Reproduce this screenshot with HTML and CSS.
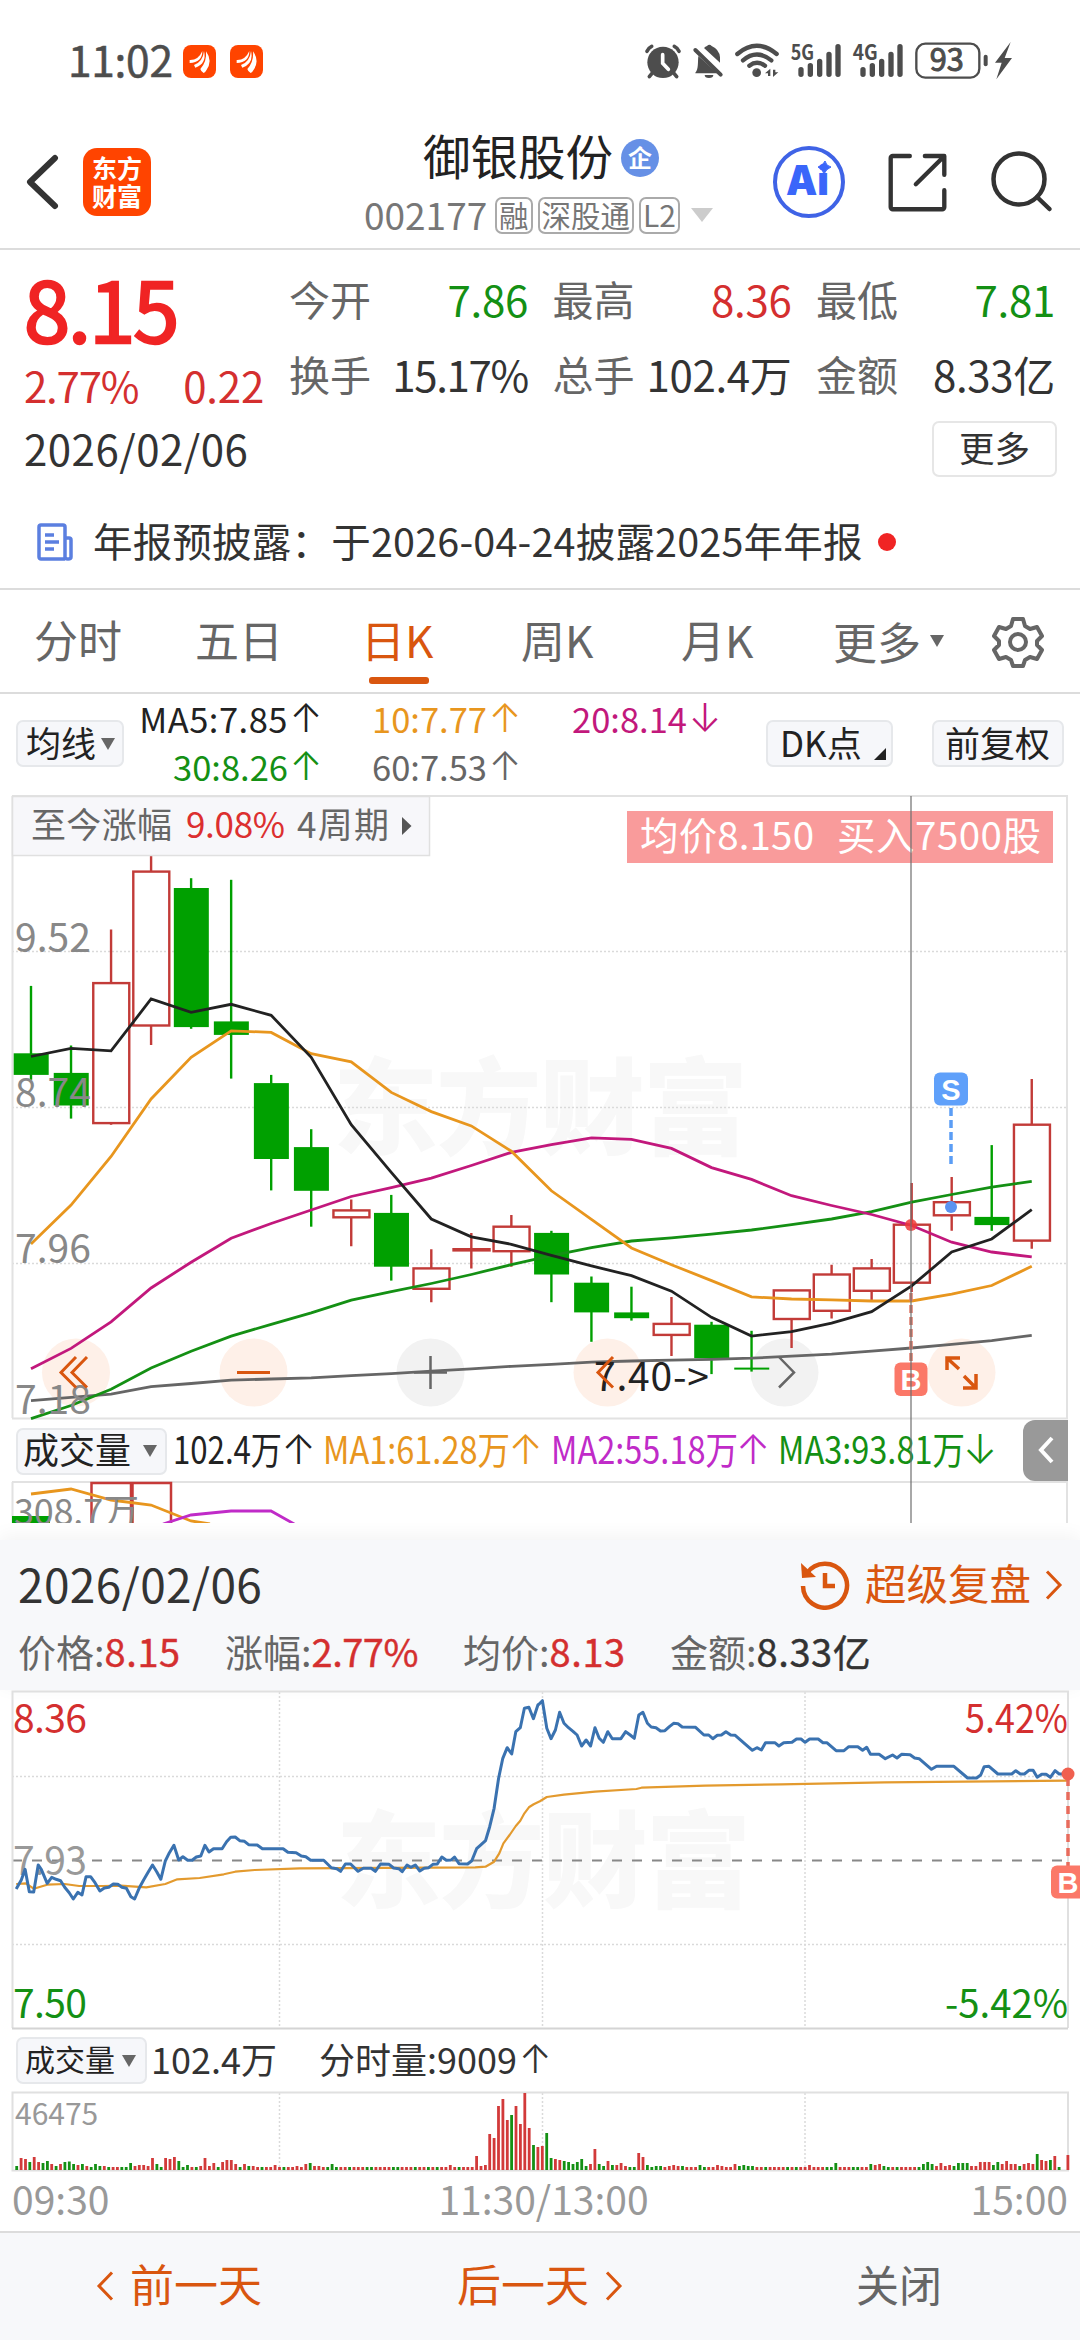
FILE: index.html
```html
<!DOCTYPE html>
<html lang="zh-CN">
<head>
<meta charset="utf-8">
<title>御银股份 002177</title>
<link rel="stylesheet" href="styles.css">
</head>
<body>
<div class="status">
  <span class="clock">11:02</span>
  <svg class="app-dot" viewBox="0 0 99 99"><rect width="99" height="99" rx="24" fill="#ff4400"/><path d="M20 45Q46 46 58 18Q58 52 20 54ZM33 60Q60 50 63 18Q72 56 37 68ZM52 72Q72 50 69 19Q90 48 70 76Q66 84 62 84Q54 80 52 72Z" fill="#fff"/></svg>
  <svg class="app-dot" viewBox="0 0 99 99"><rect width="99" height="99" rx="24" fill="#ff4400"/><path d="M20 45Q46 46 58 18Q58 52 20 54ZM33 60Q60 50 63 18Q72 56 37 68ZM52 72Q72 50 69 19Q90 48 70 76Q66 84 62 84Q54 80 52 72Z" fill="#fff"/></svg>
  <svg class="sys" viewBox="0 0 1200 210" fill="#4d4d4d">
    <g stroke="#4d4d4d" stroke-linecap="round" fill="none">
      <circle cx="99" cy="97" r="47" fill="#4d4d4d" stroke="none"/>
      <path d="M51 64Q56 53 65 49M147 64Q142 53 133 49M66 130l-8 10M132 130l8 10" stroke-width="11"/>
      <path d="M98 74v26l17 18" stroke="#fff" stroke-width="11"/>
    </g>
    <path d="M196 128C206 118 203 95 205 78L262 130H196ZM222 54Q226 50 231 48Q238 41 245 48Q268 58 270 82V98ZM224 135h26a13 9 0 0 1-26 0Z"/>
    <path d="M196 60L272 134" stroke="#4d4d4d" stroke-width="12" stroke-linecap="round"/>
    <g fill="none" stroke="#4d4d4d" stroke-width="13" stroke-linecap="round">
      <path d="M322 72Q380 23 440 72M339 91Q380 56 424 91M358 107Q381 90 405 107"/>
    </g>
    <circle cx="380" cy="128" r="13"/><path d="M405 130l16-14v22h-7v-8zM445 127l-16 14v-22h7v8z"/>
    <text x="482" y="90" font-size="62" font-weight="600" textLength="70" lengthAdjust="spacingAndGlyphs">5G</text>
    <text x="668" y="90" font-size="62" font-weight="600" textLength="75" lengthAdjust="spacingAndGlyphs">4G</text>
    <path d="M513 119v14M541 107v26M569 94v39M597 73v60M624 50v83M699 119v14M727 107v26M755 94v39M783 73v60M810 50v83" stroke="#4d4d4d" stroke-width="16" stroke-linecap="round"/>
    <rect x="859" y="41" width="189" height="102" rx="27" fill="none" stroke="#4d4d4d" stroke-width="7"/>
    <text x="950" y="124" font-size="92" stroke="#4d4d4d" stroke-width="3" text-anchor="middle">93</text>
    <rect x="1061" y="74" width="12" height="35" rx="6"/>
    <path d="M1142 36L1095 98h20l-16 50L1146 84h-22z"/>
  </svg>
</div>

<header class="header">
  <svg class="back" viewBox="0 0 34 56"><path d="M29 4L4 28L29 52" fill="none" stroke="#333" stroke-width="6" stroke-linecap="round" stroke-linejoin="round"/></svg>
  <div class="logo"><span>东方</span><span>财富</span></div>
  <div class="stock">
    <div class="name">御银股份<i>企</i></div>
    <div class="code"><span class="num">002177</span><b>融</b><b>深股通</b><b class="l2">L2</b><em></em></div>
  </div>
  <svg class="ai" viewBox="0 0 74 74"><circle cx="37" cy="37" r="34" fill="none" stroke="#3f63e6" stroke-width="4"/><text class="ai-t" x="14" y="50" textLength="43" lengthAdjust="spacingAndGlyphs">Ai</text><path d="M53 16Q54 21 59 22Q54 24 52 29Q51 24 46 22Q51 21 53 16Z" fill="#3a66fa" stroke="#3a66fa"/></svg>
  <svg class="share" viewBox="400 57 200 200" fill="none" stroke="#333" stroke-width="13" stroke-linecap="round" stroke-linejoin="round"><path d="M477 78H426a6 6 0 0 0-6 6v147a6 6 0 0 0 6 6h148a6 6 0 0 0 6-6V180M522 78h58v56M578 80L495 162"/></svg>
  <svg class="search" viewBox="0 0 64 64" fill="none" stroke="#333" stroke-width="4.5" stroke-linecap="round"><circle cx="29" cy="28" r="25.5"/><path d="M47 46l12.500 12"/></svg>
</header>

<section class="quote">
  <div class="q-left">
    <div class="price">8.15</div>
    <div class="chg"><span>2.77%</span><span class="abs">0.22</span></div>
    <div class="date">2026/02/06</div>
  </div>
  <div class="q-right">
    <div class="cell"><label>今开</label><span class="dn">7.86</span></div>
    <div class="cell"><label>最高</label><span class="up">8.36</span></div>
    <div class="cell"><label>最低</label><span class="dn">7.81</span></div>
    <div class="cell"><label>换手</label><span class="tight">15.17%</span></div>
    <div class="cell"><label>总手</label><span>102.4万</span></div>
    <div class="cell"><label>金额</label><span>8.33亿</span></div>
    <div class="more">更多</div>
  </div>
</section>
<div class="notice">
  <svg viewBox="0 0 36 38" fill="none" stroke="#5b7fe0" stroke-width="3.500"><path d="M28 36H4a2 2 0 0 1-2-2V4a2 2 0 0 1 2-2h22a2 2 0 0 1 2 2v30q0 2 3 2t3-2V17a2 2 0 0 0-2-2h-4M8 12h9M8 19h14M8 26h9"/></svg>
  <span>年报预披露：于2026-04-24披露2025年年报</span><i></i>
</div>

<nav class="tabs">
  <span>分时</span><span>五日</span><span class="on">日K</span><span>周K</span><span>月K</span><span class="drop">更多<em class="tri"></em></span>
  <svg viewBox="0 0 52 52" fill="none" stroke="#666" stroke-width="4" stroke-linejoin="round"><path d="M21 3h10l2 7 5 3 7-2 5 9-5 5v4l5 5-5 9-7-2-5 3-2 6H21l-2-6-5-3-7 2-5-9 5-5v-4l-5-5 5-9 7 2 5-3z"/><circle cx="26" cy="26" r="8"/></svg>
</nav>

<div class="mabar">
  <div class="chip c-ma">均线<em class="tri"></em></div>
  <div class="mas">
    <span class="k">MA5:7.85<u>↑</u></span><span class="o">10:7.77<u>↑</u></span><span class="m">20:8.14<u>↓</u></span>
    <span class="g">30:8.26<u>↑</u></span><span class="gr">60:7.53<u>↑</u></span>
  </div>
  <div class="chip c-dk">DK点<em></em></div>
  <div class="chip c-fq">前复权</div>
</div>

<section class="kline">
  <svg id="kchart" class="block" viewBox="0 794 1080 626" width="1080" height="626">
    <text class="wm" x="333" y="1146" textLength="415">东方财富</text>
    <g fill="none" stroke="#dadada" stroke-width="1.500" stroke-dasharray="2 2"><path d="M12 951.500H1067M12 1107.500H1067M12 1263.500H1067"/></g>
    <path d="M12 796H1068M12 1418.500H1068M12.500 796V1418M1067 796V1418" fill="none" stroke="#e2e2e2" stroke-width="2"/>
    <g fill="#fef0e8"><circle cx="76" cy="1372.500" r="34"/><circle cx="253.500" cy="1372.500" r="34"/><circle cx="607.500" cy="1372.500" r="34"/><circle cx="961.500" cy="1372.500" r="34"/></g>
    <g fill="#f2f2f2"><circle cx="430.500" cy="1372.500" r="34"/><circle cx="784.500" cy="1372.500" r="34"/></g>
    <g id="candles"></g>
    <rect x="12.500" y="796.500" width="417" height="59" fill="#f7f7fa" stroke="#e0e0e0" stroke-width="1.500"/>
    <g font-size="35" fill="#666"><text x="31" y="838" textLength="141">至今涨幅</text><text x="186" y="838" fill="#dc2f2f" textLength="99">9.08%</text><text x="297" y="838" textLength="92">4周期</text></g>
    <path d="M402 817l9.500 9-9.500 9z" fill="#555"/>
    <g font-size="39" fill="#888"><text x="15" y="952">9.52</text><text x="15" y="1107">8.74</text><text x="15" y="1263">7.96</text><text x="15" y="1414">7.18</text></g>
    <rect x="627" y="811" width="426" height="52" fill="#f99b9b"/>
    <g font-size="38.500" fill="#fff"><text x="640" y="850" textLength="174">均价8.150</text><text x="837" y="850" textLength="204">买入7500股</text></g>
    <text x="594" y="1391" font-size="39" fill="#222" textLength="115">7.40-&gt;</text>
    <g fill="none" stroke="#d9560f" stroke-width="3"><path d="M76 1357l-15 15.500 15 15M87 1357l-15 15.500 15 15M237 1372.500h33M613 1357l-15 15.500 15 15"/></g>
    <g fill="none" stroke="#666" stroke-width="2.500"><path d="M414 1372.500h33M430.500 1356v33M779 1357l15 15.500-15 15"/></g>
    <path d="M947 1370v-12h13M947 1358l12 11M976 1374v14h-13M976 1388l-12-12" fill="none" stroke="#d9560f" stroke-width="3.500"/>
    <path d="M951 1108v56" stroke="#5b9df5" stroke-width="3.500" stroke-dasharray="8 4"/>
    <rect x="934" y="1072.500" width="34" height="33" rx="6" fill="#5fa0fa"/><text class="mk" x="951" y="1100">S</text>
    <circle cx="951" cy="1207" r="6" fill="#5b93f0"/>
    <path d="M911 1293v69" stroke="#e07a6a" stroke-width="3.500" stroke-dasharray="8 4"/>
    <rect x="894.500" y="1362.500" width="33" height="33.500" rx="6" fill="#fb7868"/><text class="mk" x="911" y="1390">B</text>
    <circle cx="911" cy="1225" r="6" fill="#ee3b38" fill-opacity=".85"/>
  </svg>
  <div class="volrow">
    <div class="chip c-vol">成交量<em class="tri"></em></div>
    <svg class="block" viewBox="170 1420 850 60" width="850" height="60" font-size="38">
      <g fill="#222"><text x="173" y="1464" textLength="109" lengthAdjust="spacingAndGlyphs">102.4万</text><text class="ar" x="298.500" y="1464">↑</text></g>
      <g fill="#e8961e"><text x="323" y="1464" textLength="187" lengthAdjust="spacingAndGlyphs">MA1:61.28万</text><text class="ar" x="525.500" y="1464">↑</text></g>
      <g fill="#c02bc8"><text x="551" y="1464" textLength="187" lengthAdjust="spacingAndGlyphs">MA2:55.18万</text><text class="ar" x="753" y="1464">↑</text></g>
      <g fill="#149014"><text x="778" y="1464" textLength="187" lengthAdjust="spacingAndGlyphs">MA3:93.81万</text><text class="ar" x="980" y="1464">↓</text></g>
    </svg>
  </div>
  <svg class="block" viewBox="0 1480 1080 43" width="1080" height="43" fill="none">
    <path d="M12 1482H1068M12.500 1482V1523M1067 1482V1523" stroke="#e2e2e2" stroke-width="2"/>
    <rect x="12" y="1516" width="38" height="10" fill="#00a000"/>
    <path d="M91.500 1530V1483H131V1530M132.500 1530V1483H171V1530" stroke="#c63a38" stroke-width="2.500"/>
    <path d="M31 1494L71 1489L111 1500L151 1505L191 1521L210 1524" stroke="#e8961e" stroke-width="2.800"/>
    <path d="M163 1524L191 1515L231 1511H271L296 1525" stroke="#c02bc8" stroke-width="2.800"/>
    <text x="14" y="1525" font-size="36" fill="#888" textLength="125">308.7万</text>
  </svg>
  <div class="cross"></div>
  <div class="fold"><svg viewBox="0 0 16 28" width="16" height="28"><path d="M14 2L3 14l11 12" fill="none" stroke="#fff" stroke-width="4"/></svg></div>
</section>

<section class="panel">
  <div class="p-top">
    <span class="p-date">2026/02/06</span>
    <svg class="replay" viewBox="0 0 50 50" fill="none" stroke="#d9560f" stroke-width="4.500"><path d="M7 13A22 22 0 1 1 3 26M25 13v13h10"/><path d="M1 3l1 15 14-1z" fill="#d9560f" stroke="none"/></svg>
    <span class="p-link">超级复盘</span>
    <svg class="chev" viewBox="0 0 18 30"><path d="M2 1.500L15 15L2 28.500" fill="none" stroke="#d9560f" stroke-width="3"/></svg>
  </div>
  <div class="p-row"><span>价格:<b class="up">8.15</b></span><span>涨幅:<b class="up">2.77%</b></span><span>均价:<b class="up">8.13</b></span><span>金额:<b>8.33亿</b></span></div>
</section>

<svg class="block" viewBox="0 1690 1080 342" width="1080" height="342">
  <text class="wm" x="336" y="1899" textLength="415">东方财富</text>
  <path d="M12 1776.500H1068M12 1944.500H1068M279.500 1692V2028M542.500 1692V2028M805 1692V2028" fill="none" stroke="#dadada" stroke-width="1.500" stroke-dasharray="2 2"/>
  <path d="M12 1860.500H1068" stroke="#888" stroke-width="2" stroke-dasharray="10 10"/>
  <path d="M12.500 2028V1691.500H1068V2028" fill="none" stroke="#e0e0e0" stroke-width="2"/><path d="M12 2028.500H1068" stroke="#d4d4d4" stroke-width="2"/>
  <g font-size="39"><text x="13" y="1732.500" fill="#d42f2f" textLength="74">8.36</text><text x="13" y="1875" fill="#999" textLength="74">7.93</text><text x="13" y="2018" fill="#149014" textLength="74">7.50</text>
  <text x="965" y="1732.500" fill="#d42f2f" textLength="103" lengthAdjust="spacingAndGlyphs">5.42%</text><text x="945" y="2018" fill="#149014" textLength="123" lengthAdjust="spacingAndGlyphs">-5.42%</text></g>
  <g id="minute"></g>
  <path d="M1068 1778v88" stroke="#e86b5c" stroke-width="3.500" stroke-dasharray="8 6"/>
  <circle cx="1068" cy="1774" r="6.500" fill="#f0604f"/>
  <rect x="1051" y="1865.500" width="34" height="33" rx="6" fill="#fb7868"/><text class="mk" x="1068" y="1893">B</text>
</svg>

<div class="volrow2">
  <div class="chip c-vol2">成交量<em class="tri"></em></div>
  <span class="v1">102.4万</span><span>分时量:9009<u>↑</u></span>
</div>
<svg class="block" viewBox="0 2088 1080 84" width="1080" height="84">
  <path d="M279.500 2093V2170M542.500 2093V2170M805 2093V2170" fill="none" stroke="#dadada" stroke-width="1.500" stroke-dasharray="2 2"/>
  <rect x="12.500" y="2092.500" width="1055.500" height="78" fill="none" stroke="#e0e0e0" stroke-width="2"/>
  <text x="15" y="2125" font-size="30" fill="#999">46475</text>
  <g id="bars"></g>
</svg>
<div class="times"><span>09:30</span><span class="mid">11:30/13:00</span><span>15:00</span></div>

<footer class="footer">
  <span class="prev"><svg viewBox="0 0 18 30"><path d="M16 1.500L3 15L16 28.500" fill="none" stroke="#d9560f" stroke-width="3"/></svg>前一天</span>
  <span class="next">后一天<svg viewBox="0 0 18 30"><path d="M2 1.500L15 15L2 28.500" fill="none" stroke="#d9560f" stroke-width="3"/></svg></span>
  <span class="close">关闭</span>
</footer>
<script src="charts.js"></script>
</body>
</html>
```
FILE: styles.css
```css
* { box-sizing: border-box; }
body { margin: 0; width: 1080px; height: 2340px; overflow: hidden; background: #fff; color: #333; font-family: "Noto Sans CJK SC", "Noto Sans", sans-serif; font-size: 42px; line-height: 1; }
i, em { font-style: normal; }
u { text-decoration: none; font-family: Inter, "Liberation Sans", sans-serif; font-weight: 300; }
.block { display: block; }
.up { color: #d42f2f; }
.dn { color: #149014; }
.tri { display: inline-block; border: solid transparent; border-width: 12px 7.500px 0; border-top-color: #666; }
.wm { font-size: 105px; font-weight: 900; fill: #f8f8f8; }
.mk { font-family: "Liberation Sans", Arial, sans-serif; font-weight: 700; font-size: 29px; fill: #fff; text-anchor: middle; }
.ar { font-family: Inter, "Liberation Sans", sans-serif; font-weight: 300; text-anchor: middle; }

.status { display: flex; height: 115px; padding-left: 68px; }
.clock { width: 115px; line-height: 60px; margin-top: 29px; font-size: 42.500px; color: #4d4d4d; letter-spacing: -.3px; -webkit-text-stroke: .5px #4d4d4d; }
.app-dot { width: 33px; height: 33px; margin: 45px 14px 0 0; flex: none; }
.sys { width: 400px; height: 70px; margin: 30px 0 0 353px; flex: none; }

.header { display: flex; height: 135px; border-bottom: 2px solid #dcdcdc; }
.back { width: 34px; height: 56px; margin: 39px 0 0 26px; }
.logo { width: 68px; height: 68px; margin: 33px 0 0 23px; padding-top: 5px; border-radius: 14px; background: #ff4400; color: #fff; font-size: 25px; font-weight: 700; line-height: 28px; text-align: center; display: flex; flex-direction: column; }
.stock { width: 400px; margin-left: 213px; }
.name { display: flex; align-items: center; height: 80px; padding-left: 59px; font-size: 47.500px; color: #222; }
.name i { width: 38px; height: 38px; margin-left: 8px; margin-top: 5px; border-radius: 50%; background: #6690e6; color: #fff; font-size: 24px; font-weight: 700; line-height: 35px; text-align: center; }
.code { display: flex; align-items: center; height: 42px; color: #777; font-size: 37px; margin-top: -1px; }
.code .num { width: 131px; margin-top: -2px; }
.code b { height: 37px; margin-right: 5px; padding: 0 2px; border: 2px solid #aaa; border-radius: 7px; font-size: 29.500px; font-weight: 400; line-height: 30px; margin-top: 1px; }
.code .l2 { width: 41px; padding: 0; text-align: center; font-size: 30px; }
.code em { border: solid transparent; border-width: 14px 11px 0; border-top-color: #ccc; margin-left: 6px; }
.ai { width: 74px; height: 74px; margin: 30px 0 0 8px; }
.ai-t { font-family: Inter, sans-serif; font-size: 41px; font-weight: 900; fill: #3a66fa; }
.share { width: 67px; height: 67px; margin: 34px 0 0 38px; }
.search { width: 64px; height: 64px; margin: 36px 0 0 39px; }

.quote { display: flex; height: 250px; }
.q-left { width: 289px; padding: 6px 0 0 24px; }
.price { line-height: 102px; height: 100px; font-size: 83px; color: #f02424; letter-spacing: -2px; -webkit-text-stroke: 2.500px #f02424; }
.chg { display: flex; justify-content: space-between; padding-right: 25px; line-height: 58px; height: 56px; color: #d42f2f; letter-spacing: -1.200px; }
.chg .abs { letter-spacing: -.2px; }
.date { line-height: 72px; letter-spacing: .5px; }
.q-right { width: 765px; height: 230px; padding-top: 11px; display: grid; grid-template-columns: 239px 239px 239px; grid-template-rows: 75px 75px 56px; column-gap: 24.500px; }
.cell { display: flex; justify-content: space-between; line-height: 75px; white-space: nowrap; }
.cell span { letter-spacing: -.3px; }
.cell .tight { letter-spacing: -1.300px; }
.cell label { font-size: 41px; color: #666; }
.q-right .more { margin: 10px -2px 0 0; }
.more { grid-column: 3; justify-self: end; width: 125px; height: 56px; border: 2px solid #e6e6e6; border-radius: 7px; font-size: 35.500px; line-height: 48px; text-align: center; }

.notice { display: flex; align-items: center; height: 90px; padding: 0 0 9px 37px; border-bottom: 2px solid #dcdcdc; font-size: 39.500px; letter-spacing: .2px; }
.notice svg { width: 36px; height: 38px; margin: 4px 20px 0 0; }
.notice i { width: 18px; height: 18px; margin: 5px 0 0 15px; border-radius: 50%; background: #f02424; }

.tabs { display: grid; grid-template-columns: 161px 166px 160px 160px 152px 159px 52px; height: 104px; padding-left: 34px; border-bottom: 2px solid #dcdcdc; font-size: 44px; line-height: 99px; color: #666; }
.tabs .on { color: #d9560f; position: relative; }
.tabs .on::after { content: ""; position: absolute; left: 8px; bottom: 8px; width: 60px; height: 7px; border-radius: 3px; background: #d9560f; }
.tabs .drop { display: flex; align-items: center; }
.tabs .tri { margin: 0 0 0 9px; border-width: 12px 7px 0; }
.tabs svg { width: 52px; height: 52px; margin-top: 26px; }

.mabar { display: flex; height: 100px; padding: 26px 0 0 16px; }
.chip { display: flex; align-items: center; height: 47px; padding-bottom: 4px; border: 2px solid #e6e8eb; border-radius: 7px; background: #f6f7fa; color: #222; white-space: nowrap; }
.chip .tri { margin-top: 5px; }
.c-ma { width: 108px; padding-left: 8px; font-size: 35px; }
.c-ma .tri { margin-left: 5px; }
.mas { display: grid; grid-template-columns: 192px 199px 200px; grid-template-rows: 48px 48px; justify-items: end; width: 642px; margin-top: -26px; font-size: 34.500px; line-height: 48px; white-space: nowrap; }
.mas span { display: flex; color: #222; }
.mas u { width: 20px; margin-left: 8px; display: flex; justify-content: center; font-size: 39px; letter-spacing: 0; }
.mas .k { letter-spacing: .5px; }
.mas .o { color: #e8961e; } .mas .m { color: #c2187c; } .mas .g { color: #149014; } .mas .gr { color: #666; }
.c-dk { position: relative; width: 127px; padding-left: 12px; font-size: 35px; }
.c-dk em { position: absolute; right: 5px; bottom: 5px; width: 12px; height: 12px; background: #222; clip-path: polygon(100% 0, 100% 100%, 0 100%); }
.c-fq { width: 132px; margin-left: 39px; padding-left: 11px; font-size: 35px; }

.kline { position: relative; height: 729px; }
.volrow { display: flex; align-items: center; height: 60px; padding-left: 16px; }
.c-vol { width: 151px; margin: 2px 3px 0 0; padding: 0 0 6px 5px; font-size: 36px; }
.c-vol .tri { margin-left: 12px; }
.volrow .ar { font-size: 41px; }
.cross { position: absolute; left: 910px; top: 2px; width: 2px; height: 727px; background: rgba(110,110,110,.6); }
.fold { position: absolute; left: 1023px; top: 626px; width: 45px; height: 61px; border-radius: 12px 0 0 12px; background: #999; padding: 16px 0 0 15px; }
.fold svg { display: block; }

.panel { margin-top: 17px; height: 150px; background: #f7f8fa; box-shadow: 0 -4px 18px rgba(0,0,0,.05); }
.p-top { display: flex; align-items: center; height: 86px; padding: 0 0 0 18px; }
.p-date { width: 782px; font-size: 46px; letter-spacing: .4px; }
.replay { width: 50px; height: 50px; margin-top: 4px; }
.p-link { width: 180px; padding-left: 15px; font-size: 41.500px; color: #d9560f; white-space: nowrap; }
.chev { width: 18px; height: 30px; margin: 4px 0 0 15px; }
.p-row { display: grid; grid-template-columns: 207px 238px 207px 300px; padding-left: 18px; height: 44px; font-size: 38px; line-height: 49px; color: #666; white-space: nowrap; }
.p-row b { font-weight: 400; color: #333; letter-spacing: .6px; -webkit-text-stroke: .4px; }
.p-row span:nth-child(2) b { letter-spacing: -.5px; }
.p-row .up { color: #d42f2f; }

.volrow2 { display: flex; align-items: center; height: 56px; padding-left: 16px; font-size: 36px; }
.volrow2 > span { display: flex; margin-top: -4px; align-items: center; }
.volrow2 u { margin-left: 2px; font-size: 39px; }
.c-vol2 { width: 131px; margin-right: 4px; padding-left: 7px; font-size: 30px; }
.c-vol2 .tri { margin-left: 7px; }
.v1 { width: 168px; }
.times { display: flex; justify-content: space-between; height: 59px; padding: 0 12px; font-size: 39px; line-height: 52px; color: #999; }
.times .mid { padding-left: 7px; }
.footer { display: flex; height: 109px; padding-bottom: 5px; border-top: 2px solid #dcdcdc; background: #f7f8fa; font-size: 44px; line-height: 99px; color: #d9560f; }
.footer span { display: flex; align-items: center; height: 100px; }
.footer svg { width: 18px; height: 30px; margin-top: 5px; }
.prev { width: 360px; padding-left: 96px; gap: 16px; }
.next { width: 360px; padding-left: 97px; gap: 16px; }
.close { width: 360px; padding-left: 136px; color: #666; font-size: 43px; }
```
FILE: charts.js
```js
const NS = 'http://www.w3.org/2000/svg';
function add(id, tag, attrs) {
  const el = document.createElementNS(NS, tag);
  for (const k in attrs) el.setAttribute(k, attrs[k]);
  document.getElementById(id).appendChild(el);
}
const GREEN = '#00a000', RED = '#c23b38';

// daily candles: [type, high, body top, body bottom, low], in chart units from the top
const candles = [
  ['g',480,645,698,710],['g',626,693,773,805],['r',342,473,816,820],['r',150,200,577,625],['g',216,240,581,585],
  ['g',220,567,600,707],['g',698,718,904,981],['g',831,875,982,1070],['r',1003,1030,1047,1118],['g',992,1036,1168,1202],
  ['r',1125,1172,1222,1255],['r',1085,1125,1128,1172],['r',1041,1070,1130,1168],['g',1080,1085,1187,1255],['g',1192,1207,1280,1352],
  ['g',1217,1280,1294,1300],['r',1242,1308,1335,1387],['g',1303,1310,1392,1431],['g',1325,1415,1420,1425],['r',1225,1226,1296,1367],
  ['r',1163,1187,1276,1295],['r',1149,1172,1227,1250],['r',963,1065,1207,1230],['r',948,1010,1042,1080],['g',870,1046,1066,1080],['r',708,820,1104,1124]
];
const cx = i => 31 + 40.03 * i;
const cy = v => +(790 + v / 2.45).toFixed(1);
candles.forEach(([t, h, a, b, l], i) => {
  const x = cx(i), c = t === 'g' ? GREEN : RED;
  if (t === 'g') {
    add('candles', 'path', { d: `M${x} ${cy(h)}V${cy(l)}`, stroke: c, 'stroke-width': 2.4 });
    add('candles', 'rect', { x: x - 17.3, y: cy(a), width: 35, height: cy(b) - cy(a), fill: c });
  } else {
    add('candles', 'path', { d: `M${x} ${cy(h)}V${cy(a)}M${x} ${cy(b)}V${cy(l)}`, stroke: c, 'stroke-width': 2.4 });
    add('candles', 'rect', { x: x - 17.8, y: cy(a), width: 36, height: cy(b) - cy(a), fill: 'none', stroke: c, 'stroke-width': 2.4 });
  }
});
const averages = {
  '#666666': [1496,1488,1480,1462,1454,1446,1443,1440,1435,1430,1424,1418,1412,1407,1402,1399,1397,1395,1392,1387,1382,1375,1367,1358,1349,1336],
  '#149014': [1540,1508,1468,1416,1375,1338,1309,1281,1250,1229,1209,1187,1163,1141,1121,1105,1097,1088,1078,1065,1051,1033,1010,991,973,959],
  '#c2187c': [1418,1368,1303,1220,1157,1098,1062,1029,996,974,951,920,888,869,852,856,878,925,954,994,1018,1040,1067,1108,1132,1144],
  '#e8961e': [1112,1017,898,757,655,590,594,646,666,741,788,823,885,982,1052,1122,1163,1202,1242,1247,1249,1252,1252,1235,1214,1167],
  '#222222': [653,633,639,512,545,525,552,655,820,937,1051,1095,1113,1140,1166,1190,1228,1292,1338,1327,1306,1278,1215,1132,1100,1028]
};
for (const c in averages)
  add('candles', 'polyline', { points: averages[c].map((v, i) => cx(i) + ',' + cy(v)).join(' '), fill: 'none', stroke: c, 'stroke-width': 2.8 });

// intraday curves: the second half is offset by half the plot
function curve(first, second, color, width) {
  const read = (s, dx) => s.split(' ').map(p => { const [x, y] = p.split(',').map(Number); return ((x + dx) / 2.904).toFixed(1) + ',' + (1680 + y / 3).toFixed(1); });
  add('minute', 'polyline', { points: read(first, 0).concat(read(second, 1568)).join(' '), fill: 'none', stroke: color, 'stroke-width': width, 'stroke-linejoin': 'round' });
}
curve('47,612 75,610 98,626 137,614 188,612 230,618 300,618 350,617 425,622 480,612 515,598 580,594 650,583 683,575 740,570 870,565 1380,562 1410,560 1435,545 1450,520 1462,490 1480,465 1498,438 1511,422 1523,400 1536,382 1550,373',
  '0,364 20,351 70,344 160,335 280,327 295,323 480,317 700,313 1000,307 1533,302', '#e39a2e', 2.2);
curve('47,627 62,600 73,568 85,635 98,636 111,555 120,568 137,610 150,592 163,598 176,602 188,622 201,638 213,657 226,637 238,645 250,590 263,590 276,608 290,633 303,624 316,622 329,612 342,613 354,622 367,625 380,650 391,657 404,625 417,600 430,577 443,555 455,575 467,598 480,543 492,518 505,496 519,540 531,530 545,541 558,541 570,531 583,528 595,496 607,516 620,506 645,506 658,485 670,472 683,471 696,482 710,484 722,494 747,495 762,506 822,506 836,517 860,518 875,528 888,530 902,541 940,541 962,563 978,566 989,574 1003,552 1018,552 1040,574 1055,565 1078,565 1090,574 1105,552 1130,553 1143,564 1158,566 1168,575 1182,555 1193,562 1206,555 1219,573 1232,565 1245,563 1257,553 1270,552 1283,531 1296,541 1310,540 1320,531 1333,551 1358,552 1370,542 1384,506 1397,494 1410,482 1422,440 1435,385 1448,295 1460,235 1473,203 1486,222 1498,155 1511,143 1523,85 1536,82 1549,116 1562,75',
  '0,70 7,62 20,145 32,176 45,150 57,97 70,130 83,143 96,154 108,165 121,198 134,180 147,198 160,143 172,175 184,187 197,155 210,176 235,176 249,155 262,165 274,175 287,105 299,97 312,130 323,141 337,143 350,153 363,152 376,140 388,130 401,131 413,141 452,142 476,165 490,165 502,176 515,166 527,165 540,155 554,165 567,166 617,211 630,203 643,210 655,188 682,188 694,198 708,188 732,187 745,177 758,177 770,187 783,177 808,177 822,188 833,188 860,212 883,212 897,200 923,200 937,211 949,202 960,223 985,223 1003,236 1024,225 1037,234 1050,223 1075,224 1088,234 1101,236 1137,268 1152,259 1202,259 1242,294 1268,294 1280,285 1290,260 1304,259 1330,282 1370,282 1382,272 1395,282 1407,282 1420,271 1432,271 1444,292 1457,283 1470,283 1482,292 1496,272 1508,282 1533,282', '#3a72b0', 3);

const peaks = {0:-4,1:12,2:11,3:-8,4:13,5:8,6:-7,7:-9,8:6,9:-4,10:6,11:-8,12:-8.5,13:-6,14:5,15:-6,16:4,18:-6,19:-4,20:4,24:-3,25:-3,26:-7,27:4,28:5,29:5,30:4,31:12,32:-6,33:-3,34:12,35:11,36:13,37:-9,39:-5,42:4,43:12,44:4,45:7,47:8,48:10,49:10,50:6,51:-3,52:6,53:-4,54:4,59:5,64:4,66:6,67:-7,68:4,69:4,71:-3,72:-6,99:5,105:14,106:4,107:5,108:36,109:32,110:64,111:71,112:50,113:-55,114:64,115:46,116:77,117:42,118:-25,119:23,120:24,121:-37,122:-12,123:11,124:10,125:-9,126:-8,127:-6,128:-8,129:-11,130:-4,131:6,132:21,133:-6,134:-4,135:9,136:-5,137:5,138:7,139:4,140:-3,141:-3,142:17,143:13,144:-5,145:-3,146:-4,147:-4,149:4,150:5,151:4,152:-4,156:-5,160:5,161:4,164:6,165:-4,166:-5,167:-4,168:-4,181:5,187:-7,195:-6,196:5,197:6,198:-4,207:-6,208:-8,209:-6,210:4,211:7,212:4,213:5,214:-4,215:-7,216:-7,217:-7,218:4,219:4,220:8,221:8,222:8,223:-5,224:-8,225:6,226:9,227:6,228:6,229:-4,230:6,231:7,232:6,233:-16,234:10,235:9,236:-10,237:14,238:-3,239:0,240:15};
for (let i = 0; i <= 240; i++) {
  const v = i in peaks ? peaks[i] : (i % 5 === 1 || i % 7 === 3 ? -3 : 3);
  const h = Math.abs(v);
  add('bars', 'rect', { x: (15.3 + 4.38 * i).toFixed(1), y: 2170 - h, width: 2.8, height: h, fill: v < 0 ? '#149014' : '#d23a3a' });
}
```
